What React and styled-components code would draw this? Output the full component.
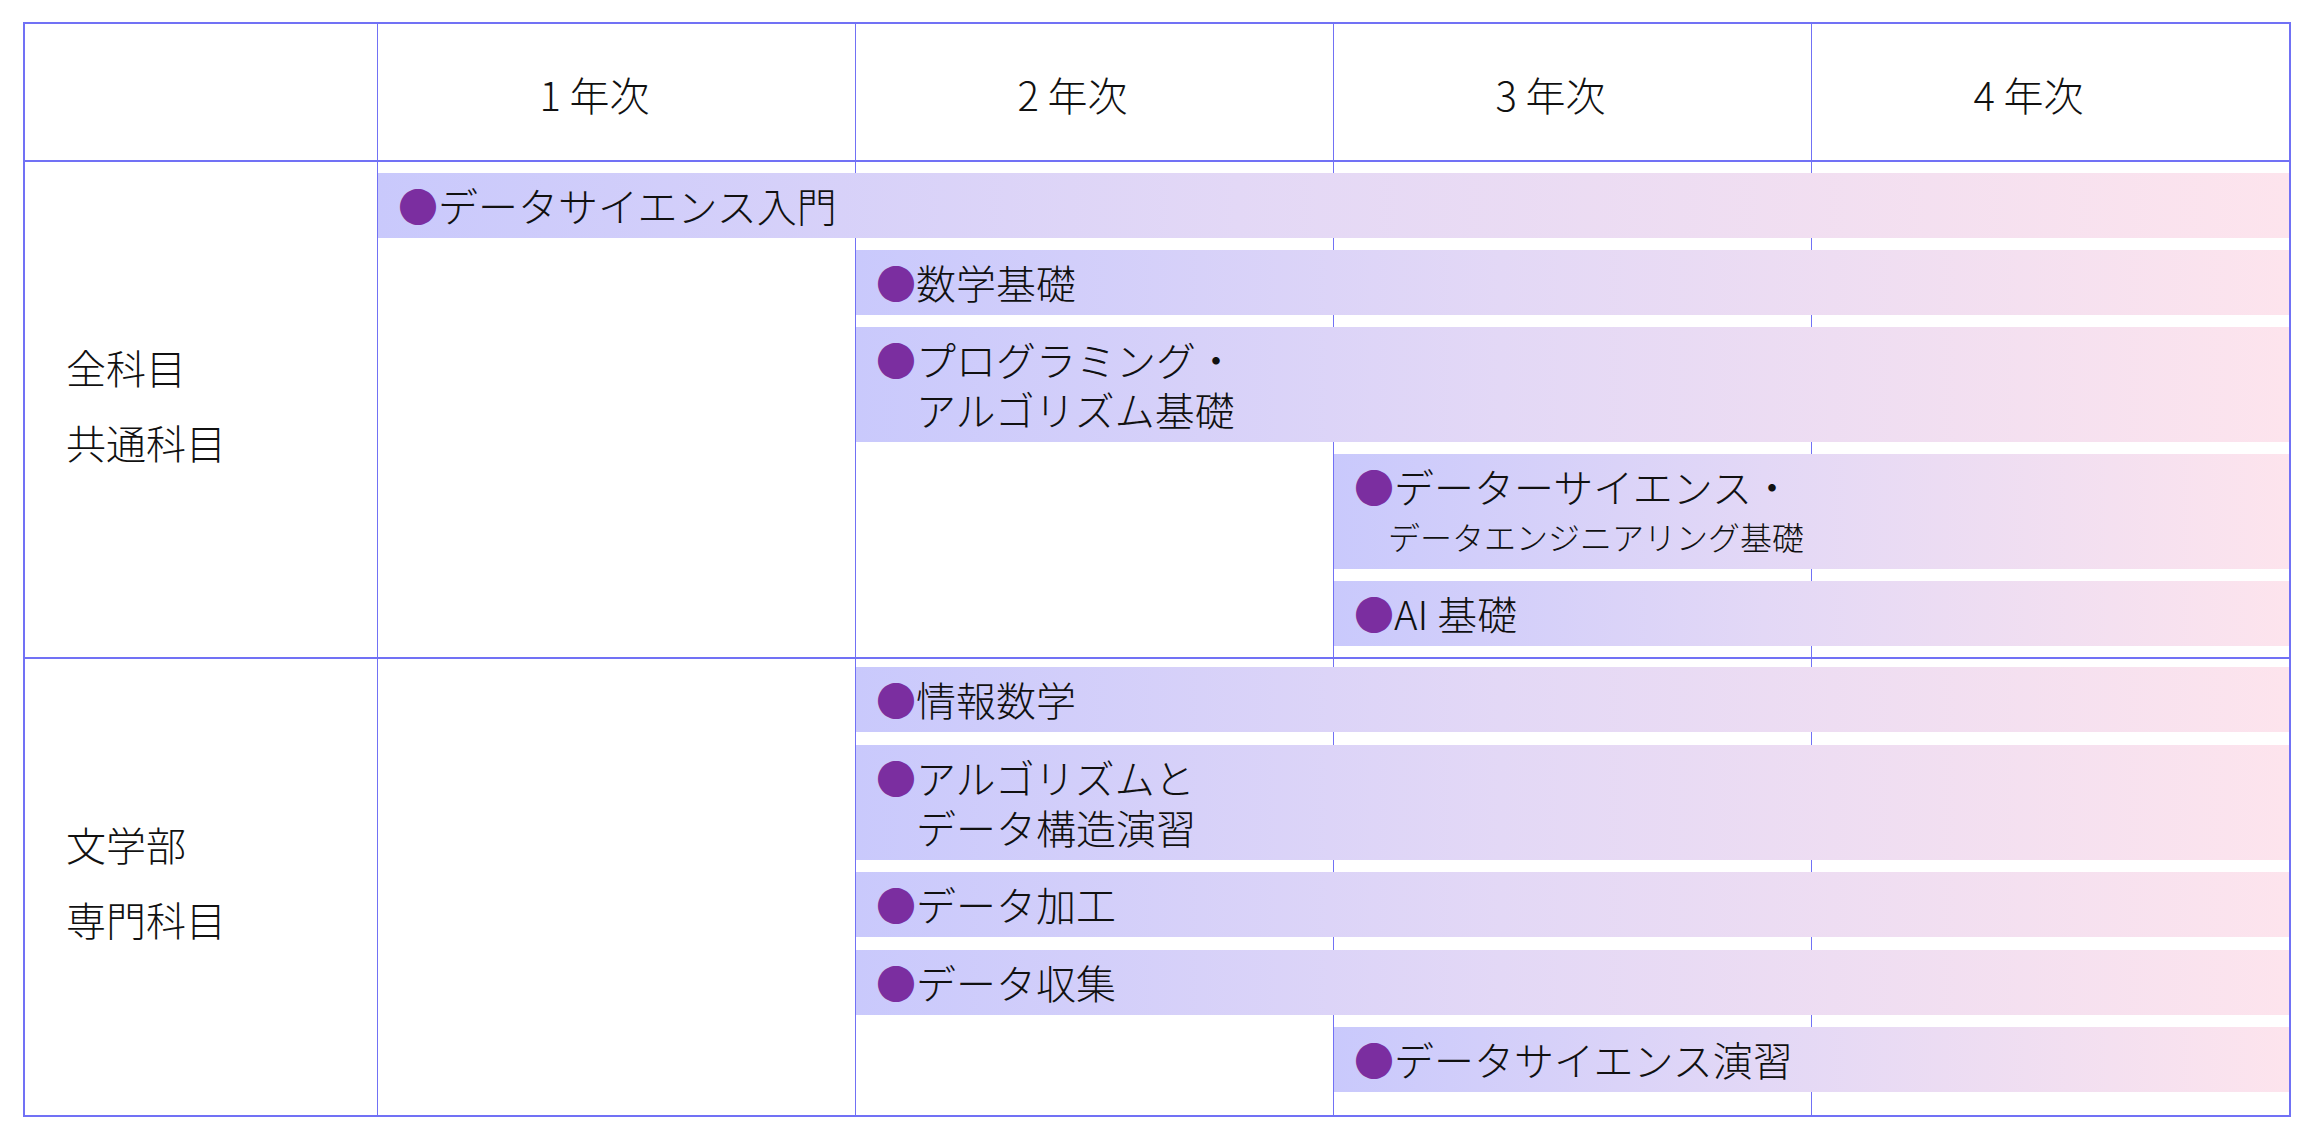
import React from "react";
import styled, { createGlobalStyle } from "styled-components";

const LINE = "#7171f5";

const GlobalStyle = createGlobalStyle`
  html, body {
    margin: 0;
    padding: 0;
    background: #fff;
  }
  body {
    font-family: "Noto Sans CJK JP", "Noto Sans", sans-serif;
    font-weight: 300;
    color: #111;
  }
`;

const years = ["1 年次", "2 年次", "3 年次", "4 年次"];

const groups = [
  {
    label: ["全科目", "共通科目"],
    pad: "11px 0 11px",
    gap: "12px",
    courses: [
      { start: 0, lines: ["データサイエンス入門"] },
      { start: 1, lines: ["数学基礎"] },
      { start: 1, lines: ["プログラミング・", "アルゴリズム基礎"] },
      { start: 2, lines: ["データーサイエンス・", "データエンジニアリング基礎"], small: true },
      { start: 2, lines: ["AI 基礎"] },
    ],
  },
  {
    label: ["文学部", "専門科目"],
    pad: "8px 0 23px",
    gap: "12.5px",
    courses: [
      { start: 1, lines: ["情報数学"] },
      { start: 1, lines: ["アルゴリズムと", "データ構造演習"] },
      { start: 1, lines: ["データ加工"] },
      { start: 1, lines: ["データ収集"] },
      { start: 2, lines: ["データサイエンス演習"] },
    ],
  },
];

const App = () => {
  return (
    <Page>
      <GlobalStyle />
      <Table>
        <Row>
          <LabelCell />
          <YearHeads>
            {years.map((y) => (
              <YearHead key={y}>{y}</YearHead>
            ))}
          </YearHeads>
        </Row>
        {groups.map((g) => (
          <Row key={g.label.join("")}>
            <LabelCell>
              <div>
                {g.label.map((l) => (
                  <div key={l}>{l}</div>
                ))}
              </div>
            </LabelCell>
            <Lanes $pad={g.pad} $gap={g.gap}>
              {g.courses.map((c) => (
                <Bar key={c.lines.join("")} $start={c.start}>
                  <Dot>●</Dot>
                  <BarText>
                    {c.lines.map((l, i) => (
                      <Line key={l} $small={c.small && i > 0}>
                        {l}
                      </Line>
                    ))}
                  </BarText>
                </Bar>
              ))}
            </Lanes>
          </Row>
        ))}
      </Table>
    </Page>
  );
};

export default App;

const Page = styled.div`
  width: 2321px;
  box-sizing: border-box;
  padding: 22px 30px 28px 23px;
`;

const Table = styled.div`
  width: 2268px;
  box-sizing: border-box;
  border: 2px solid ${LINE};
  display: flex;
  flex-direction: column;
`;

const Row = styled.div`
  display: grid;
  grid-template-columns: 352px 1fr;
  & + & {
    border-top: 2px solid ${LINE};
  }
`;

const LabelCell = styled.div`
  display: flex;
  align-items: center;
  padding: 0 0 10px 41px;
  font-size: 40px;
  line-height: 75px;
  color: #111;
`;

const YearHeads = styled.div`
  display: grid;
  grid-template-columns: repeat(4, 1fr);
  height: 136px;
`;

const YearHead = styled.div`
  display: flex;
  align-items: center;
  justify-content: center;
  border-left: 1px solid ${LINE};
  padding: 4px 44px 0 0;
  font-size: 40px;
  color: #111;
`;

const Lanes = styled.div`
  display: flex;
  flex-direction: column;
  gap: ${(p) => p.$gap};
  padding: ${(p) => p.$pad};
  background-image: linear-gradient(to right, ${LINE} 0, ${LINE} 1px, transparent 1px);
  background-size: 25% 100%;
  background-repeat: repeat-x;
`;

const Bar = styled.div`
  display: flex;
  align-items: flex-start;
  margin-left: calc(${(p) => p.$start} * 25% + 1px);
  padding: 7px 20px 8px 20px;
  background: linear-gradient(to right, #c9c9fc 0%, #e3d8f6 45%, #fde4ed 100%);
  font-size: 40px;
  line-height: 50px;
`;

const Dot = styled.span`
  color: #7b2ea0;
  font-size: 40px;
  line-height: 50px;
  flex: none;
`;

const BarText = styled.div`
  display: flex;
  flex-direction: column;
  color: #111;
`;

const Line = styled.span`
  font-size: ${(p) => (p.$small ? "32px" : "40px")};
  margin-left: ${(p) => (p.$small ? "-6px" : "0")};
  line-height: 50px;
  white-space: nowrap;
`;
